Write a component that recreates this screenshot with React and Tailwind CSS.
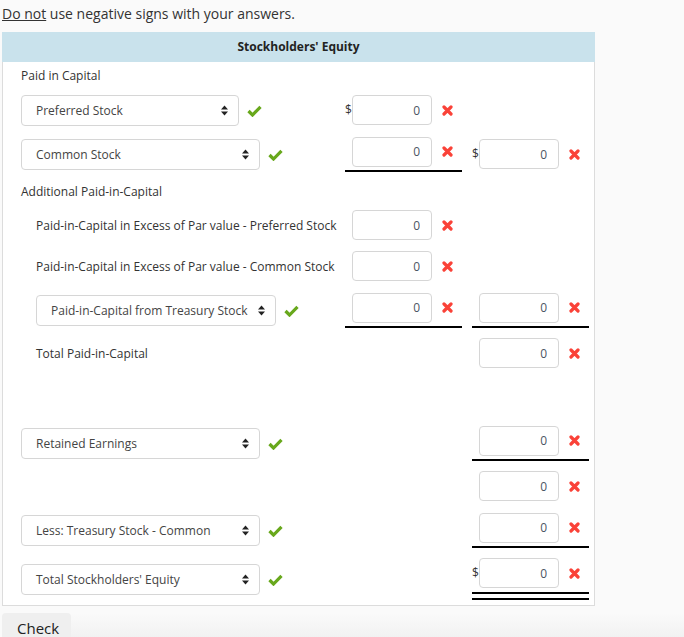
import React from "react";

const font = { fontFamily: '"Open Sans", "Liberation Sans", sans-serif' };

const CheckMark = () => (
  <svg width="15" height="12" viewBox="0 0 15 12" className="ml-[8px] shrink-0">
    <path d="M1.5 6 L5.5 10 L13.5 1.8" fill="none" stroke="#68a81c" strokeWidth="3.2" />
  </svg>
);

const XMark = () => (
  <svg width="11" height="11" viewBox="0 0 11 11" className="ml-[10px] shrink-0">
    <path d="M2 2 L9 9 M9 2 L2 9" fill="none" stroke="#fa4238" strokeWidth="3.2" strokeLinecap="round" />
  </svg>
);

const UpDown = () => (
  <svg width="7" height="11" viewBox="0 0 7 11" className="shrink-0">
    <polygon points="0,4.5 3.5,0.5 7,4.5" fill="#222" />
    <polygon points="0,6.5 3.5,10.5 7,6.5" fill="#222" />
  </svg>
);

// fake dropdown with the green check beside it
const Picker = ({ w, children }) => (
  <div className="flex items-center">
    <div className={`${w} h-[31px] bg-white border border-[#d6d6d6] rounded-[4px] flex items-center justify-between pl-[14px] pr-[10px] text-[12px] text-[#444]`}>
      <span className="whitespace-nowrap">{children}</span>
      <UpDown />
    </div>
    <CheckMark />
  </div>
);

const Amount = ({ dollar, line }) => (
  <div className="flex flex-col">
    <div className="flex items-center">
      <span className="w-[7px] text-[12px] text-[#333] leading-none">{dollar ? "$" : ""}</span>
      <input
        readOnly
        value="0"
        className="w-[80px] h-[30px] bg-white border border-[#d6d6d6] rounded-[4px] text-right pr-[11px] text-[12px] text-[#4a5563] outline-none"
        style={font}
      />
      <XMark />
    </div>
    {line === "single" && <div className="mt-[3px] h-[2px] bg-black" />}
    {line === "double" && (
      <>
        <div className="mt-[4px] h-[2px] bg-black" />
        <div className="mt-[4px] h-[2px] bg-black" />
      </>
    )}
  </div>
);

const Row = ({ h, label, c2, c3 }) => (
  <div className={`flex items-center ${h}`}>
    <div className="w-[324px] text-[12px] text-[#333] pt-[1px]">{label}</div>
    <div className="w-[117px]">{c2}</div>
    <div className="w-[117px] ml-[10px]">{c3}</div>
  </div>
);

export default function App() {
  return (
    <div className="min-h-screen bg-[#fafafa] text-[#333] overflow-hidden" style={font}>
      <p className="pl-[2px] pt-[4px] text-[14px] leading-[20px] text-[#333]">
        <span className="underline">Do not</span> use negative signs with your answers.
      </p>

      <div className="mt-[8px] ml-[2px] w-[593px] bg-white border border-t-0 border-[#dcdcdc]">
        <div className="h-[30px] -mx-px bg-[#c9e2ec] flex items-center justify-center text-[12px] font-bold text-[#222]">
          Stockholders' Equity
        </div>

        <div className="pl-[18px]">
          <Row h="h-[26px]" label="Paid in Capital" />
          <Row
            h="h-[44px]"
            label={<Picker w="w-[218px]">Preferred Stock</Picker>}
            c2={<Amount dollar />}
          />
          <Row
            h="h-[44px]"
            label={<Picker w="w-[239px]">Common Stock</Picker>}
            c2={<Amount line="single" />}
            c3={<Amount dollar />}
          />
          <Row h="h-[30px]" label="Additional Paid-in-Capital" />
          <Row
            h="h-[38px]"
            label={<span className="pl-[15px]">Paid-in-Capital in Excess of Par value - Preferred Stock</span>}
            c2={<Amount />}
          />
          <Row
            h="h-[44px]"
            label={<span className="pl-[15px]">Paid-in-Capital in Excess of Par value - Common Stock</span>}
            c2={<Amount />}
          />
          <Row
            h="h-[44px]"
            label={
              <div className="pl-[15px]">
                <Picker w="w-[240px]">Paid-in-Capital from Treasury Stock</Picker>
              </div>
            }
            c2={<Amount line="single" />}
            c3={<Amount line="single" />}
          />
          <Row
            h="h-[42px]"
            label={<span className="pl-[15px]">Total Paid-in-Capital</span>}
            c3={<Amount />}
          />
          <div className="h-[47px]" />
          <Row
            h="h-[44px]"
            label={<Picker w="w-[239px]">Retained Earnings</Picker>}
            c3={<Amount line="single" />}
          />
          <Row h="h-[42px]" c3={<Amount />} />
          <Row
            h="h-[46px]"
            label={<Picker w="w-[239px]">Less: Treasury Stock - Common</Picker>}
            c3={<Amount line="single" />}
          />
          <Row
            h="h-[52px]"
            label={<Picker w="w-[239px]">Total Stockholders' Equity</Picker>}
            c3={<Amount dollar line="double" />}
          />
        </div>
      </div>

      <div className="mt-[7px] flex">
        <button className="ml-[2px] w-[69px] h-[40px] bg-[#efefef] rounded-t-[4px] pl-[15px] pt-[5px] text-left text-[15px] leading-[20px] text-[#222] flex items-start" style={font}>
          Check
        </button>
        <div className="flex-1 h-[40px] bg-gradient-to-b from-[#fafafa] to-[#ececec]" />
      </div>
    </div>
  );
}
